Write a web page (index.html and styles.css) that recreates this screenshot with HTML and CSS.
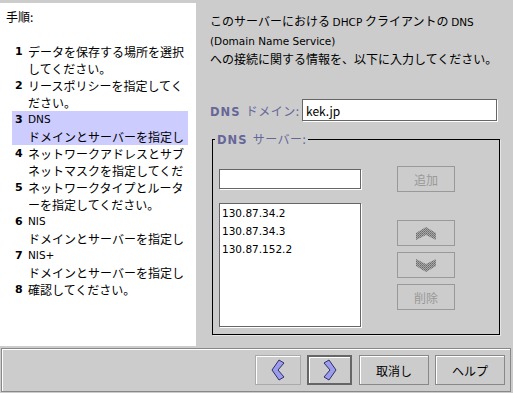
FILE: index.html
```html
<!DOCTYPE html>
<html lang="ja">
<head>
    <meta charset="UTF-8">
    <title>DHCP 構成ウィザード - DNS</title>
    <link rel="stylesheet" href="styles.css">
</head>
<body>
    <div class="window">
        <div class="main">
            <!-- Steps -->
            <div class="steps">
                <div class="steps-title">手順:</div>
                <ol class="step-list">
                    <li class="step"><span class="num">1</span><span class="step-text"><span>データを保存する場所を選択</span><span>してください。</span></span></li>
                    <li class="step"><span class="num">2</span><span class="step-text"><span>リースポリシーを指定してく</span><span>ださい。</span></span></li>
                    <li class="step current"><span class="num">3</span><span class="step-text"><span class="lat">DNS</span><span>ドメインとサーバーを指定し</span></span></li>
                    <li class="step"><span class="num">4</span><span class="step-text"><span>ネットワークアドレスとサブ</span><span>ネットマスクを指定してくだ</span></span></li>
                    <li class="step"><span class="num">5</span><span class="step-text"><span>ネットワークタイプとルータ</span><span>ーを指定してください。</span></span></li>
                    <li class="step"><span class="num">6</span><span class="step-text"><span class="lat">NIS</span><span>ドメインとサーバーを指定し</span></span></li>
                    <li class="step"><span class="num">7</span><span class="step-text"><span class="lat">NIS+</span><span>ドメインとサーバーを指定し</span></span></li>
                    <li class="step"><span class="num">8</span><span class="step-text"><span>確認してください。</span></span></li>
                </ol>
            </div>

            <!-- Form -->
            <div class="content">
                <div class="intro">
                    <p>このサーバーにおける <span class="lat">DHCP</span> クライアントの <span class="lat">DNS</span></p>
                    <p class="sub lat">(Domain Name Service)</p>
                    <p>への接続に関する情報を、以下に入力してください。</p>
                </div>

                <div class="domain-row">
                    <label class="domain-label" for="domain"><b class="key">DNS</b> ドメイン:</label>
                    <input class="domain-input" type="text" id="domain" value="kek.jp">
                </div>

                <fieldset class="servers">
                    <legend><b class="key">DNS</b> サーバー:</legend>
                    <div class="server-body">
                        <div class="server-left">
                            <input class="server-input" type="text">
                            <div class="server-list">
                                <div>130.87.34.2</div>
                                <div>130.87.34.3</div>
                                <div>130.87.152.2</div>
                            </div>
                        </div>
                        <div class="server-right">
                            <button class="side-btn add" disabled>追加</button>
                            <button class="side-btn up" disabled>
                                <svg width="20" height="13" viewBox="0 0 20 13">
                                    <defs>
                                        <pattern id="hatchUp" width="2" height="2" patternUnits="userSpaceOnUse">
                                            <rect width="2" height="2" fill="#a8a8a8"/>
                                            <rect width="1" height="1" fill="#6a6a6a"/>
                                            <rect x="1" y="1" width="1" height="1" fill="#7e7e7e"/>
                                        </pattern>
                                    </defs>
                                    <polygon points="0,6 10,0 20,6 20,13 10,8 0,13" fill="url(#hatchUp)"/>
                                </svg>
                            </button>
                            <button class="side-btn down" disabled>
                                <svg width="20" height="13" viewBox="0 0 20 13">
                                    <defs>
                                        <pattern id="hatchDown" width="2" height="2" patternUnits="userSpaceOnUse">
                                            <rect width="2" height="2" fill="#a8a8a8"/>
                                            <rect width="1" height="1" fill="#6a6a6a"/>
                                            <rect x="1" y="1" width="1" height="1" fill="#7e7e7e"/>
                                        </pattern>
                                    </defs>
                                    <polygon points="0,0 10,5 20,0 20,7 10,13 0,7" fill="url(#hatchDown)"/>
                                </svg>
                            </button>
                            <button class="side-btn remove" disabled>削除</button>
                        </div>
                    </div>
                </fieldset>
            </div>
        </div>

        <!-- Wizard buttons -->
        <div class="footer">
            <button class="nav-btn back">
                <svg width="14" height="22" viewBox="0 0 14 22">
                    <polygon points="8,1 13,4 7,11 13,18 8,21 1,11" fill="#9c9ce8" stroke="#2e2e6e" stroke-width="1"/>
                </svg>
            </button>
            <button class="nav-btn next">
                <svg width="14" height="22" viewBox="0 0 14 22">
                    <polygon points="6,1 1,4 7,11 1,18 6,21 13,11" fill="#9c9ce8" stroke="#2e2e6e" stroke-width="1"/>
                </svg>
            </button>
            <button class="text-btn">取消し</button>
            <button class="text-btn">ヘルプ</button>
        </div>
    </div>
</body>
</html>
```

FILE: styles.css
```css
/* General Styles */
body {
    margin: 0;
    background-color: #cccccc;
    font-family: "Noto Sans CJK JP", sans-serif;
    font-size: 12px;
    color: #000;
}

.lat {
    font-family: "DejaVu Sans", sans-serif;
    font-size: 10.5px;
}

.key {
    font-family: "DejaVu Sans", sans-serif;
    font-size: 11.5px;
    letter-spacing: 1px;
    margin-right: 2px;
}

.window {
    width: 513px;
    height: 393px;
    padding-top: 3px;
    box-sizing: border-box;
    display: flex;
    flex-direction: column;
}

.main {
    display: flex;
    height: 345px;
}

/* Steps panel */
.steps {
    width: 196px;
    height: 343px;
    background-color: #fff;
    padding-top: 5px;
    box-sizing: border-box;
}

.steps-title {
    height: 17px;
    line-height: 17px;
    padding-left: 6px;
}

.step-list {
    list-style: none;
    margin: 18px 0 0 12px;
    padding: 0;
    width: 176px;
}

.step {
    display: flex;
    height: 34px;
    padding-left: 3px;
    line-height: 17px;
}

.step.current {
    background-color: #ccccff;
}

.num {
    width: 13px;
    font-family: "DejaVu Sans", sans-serif;
    font-weight: bold;
    font-size: 11px;
}

.step-text {
    width: 158px;
    overflow: hidden;
}

.step-text span {
    display: block;
    height: 17px;
    white-space: nowrap;
}

/* Form panel */
.content {
    flex: 1;
    padding: 9px 13px 0 14px;
}

.intro p {
    margin: 0;
    height: 17px;
    line-height: 17px;
}

.intro .sub {
    margin-top: 4px;
}

.domain-row {
    display: flex;
    align-items: center;
    height: 22px;
    margin-top: 32px;
}

.domain-label {
    width: 92px;
    color: #666699;
    letter-spacing: 0.5px;
}

.domain-input {
    width: 195px;
    height: 22px;
    box-sizing: border-box;
    margin: 0;
    padding: 0 3px;
    border: 1px solid #666;
    box-shadow: 1px 1px 0 #fff;
    font-family: "Noto Sans CJK JP", sans-serif;
    font-size: 12px;
    outline: none;
}

.servers {
    width: 288px;
    height: 205px;
    box-sizing: border-box;
    margin: 9px 0 0 2px;
    padding: 0 0 0 6px;
    border: 1px solid #000;
    box-shadow: 1px 1px 0 #e6e6e6;
    min-inline-size: auto;
}

.servers legend {
    height: 18px;
    margin-left: -4px;
    padding: 0 2px;
    line-height: 18px;
    color: #666699;
    letter-spacing: 0.5px;
}

.server-body {
    display: flex;
    gap: 36px;
    padding-top: 21px;
}

.server-left {
    display: flex;
    flex-direction: column;
}

.server-input {
    width: 142px;
    height: 20px;
    box-sizing: border-box;
    margin: 0;
    border: 1px solid #666;
    box-shadow: 1px 1px 0 #fff;
    outline: none;
}

.server-list {
    width: 142px;
    height: 124px;
    box-sizing: border-box;
    margin-top: 14px;
    padding-left: 2px;
    background-color: #fff;
    border: 1px solid #666;
    box-shadow: 1px 1px 0 #fff;
    font-family: "DejaVu Sans", sans-serif;
    font-size: 10.5px;
    line-height: 18px;
}

.server-right {
    display: flex;
    flex-direction: column;
    margin-top: -3px;
}

.side-btn {
    width: 58px;
    height: 26px;
    margin: 0;
    padding: 0;
    display: flex;
    align-items: center;
    justify-content: center;
    background-color: #cccccc;
    border: 1px solid #999;
    color: #999;
    font-family: "Noto Sans CJK JP", sans-serif;
    font-size: 12px;
}

.side-btn.up {
    margin-top: 28px;
}

.side-btn.down,
.side-btn.remove {
    margin-top: 6px;
}

/* Footer buttons */
.footer {
    height: 44px;
    box-sizing: border-box;
    margin: 0 2px 1px 1px;
    padding-right: 5px;
    border: 1px solid #888;
    box-shadow: inset 1px 1px 0 #fff;
    display: flex;
    align-items: center;
    justify-content: flex-end;
    gap: 6px;
}

.nav-btn,
.text-btn {
    height: 30px;
    margin: 0;
    padding: 0;
    display: flex;
    align-items: center;
    justify-content: center;
    background-color: #cccccc;
    font-family: "Noto Sans CJK JP", sans-serif;
    font-size: 12px;
    color: #000;
}

.nav-btn {
    width: 46px;
    border: 1px solid #aaa;
    box-shadow: inset 1px 1px 0 #fff;
}

.nav-btn.next {
    width: 45px;
    border: 2px solid #666;
    margin-right: 1px;
}

.text-btn {
    width: 70px;
    border: 1px solid #888;
    box-shadow: inset 1px 1px 0 #fff;
}
```
